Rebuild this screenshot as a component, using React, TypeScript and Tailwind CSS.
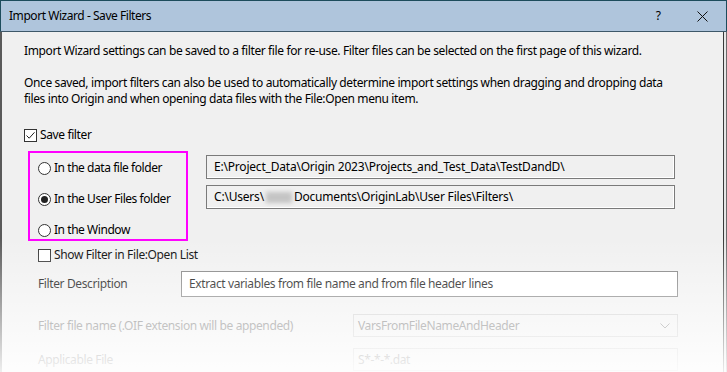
import React from "react";

function Check({ checked }: { checked?: boolean }) {
  return (
    <span className="inline-flex w-[13px] h-[13px] border border-[#333] bg-white items-center justify-center shrink-0">
      {checked && (
        <svg width="11" height="11" viewBox="0 0 11 11">
          <path d="M1.5 5.5 L4.2 8.2 L9.5 2.3" fill="none" stroke="#222" strokeWidth="1" />
        </svg>
      )}
    </span>
  );
}

function Radio({ checked }: { checked?: boolean }) {
  return (
    <span className="inline-flex w-[13px] h-[13px] rounded-full border border-[#333] bg-white items-center justify-center shrink-0">
      {checked && <span className="w-[7px] h-[7px] rounded-full bg-[#222]" />}
    </span>
  );
}

function Chevron() {
  return (
    <svg width="10" height="6" viewBox="0 0 10 6" className="ml-auto mr-[7px]">
      <path d="M0.5 0.5 L5 5 L9.5 0.5" fill="none" stroke="#888" strokeWidth="1" />
    </svg>
  );
}

export default function App() {
  return (
    <div className="relative w-[727px] h-[372px] overflow-hidden bg-white font-[family-name:Noto_Sans,sans-serif] text-[12px] text-black">
      <div className="flex flex-col w-[727px] h-full">
        {/* title bar */}
        <div className="h-[31px] shrink-0 bg-[#afc5dc] border-t border-l border-r border-[#1d4c5c] flex items-center pl-[8px]">
          <span className="leading-[16px] tracking-[-0.45px]">Import Wizard - Save Filters</span>
          <span className="ml-auto leading-[16px] mr-[36px]">?</span>
          <svg width="11" height="11" viewBox="0 0 11 11" className="mr-[18px]">
            <path d="M0.5 0.5 L10.5 10.5 M10.5 0.5 L0.5 10.5" stroke="#111" strokeWidth="1" />
          </svg>
        </div>
        {/* body */}
        <div className="flex flex-1 border-t border-[#3e5869]">
          <div className="w-[2px] bg-[#5a5a5a]" />
          <div className="flex-1 bg-[#f0f0f0] pl-[22px] pt-[11px] leading-[16px] tracking-[-0.38px]">
            <p>
              Import Wizard settings can be saved to a filter file for re-use. Filter files can be selected on the first page of this wizard.
            </p>
            <p className="mt-[16px]">
              Once saved, import filters can also be used to automatically determine import settings when dragging and dropping data
              <br />
              files into Origin and when opening data files with the File:Open menu item.
            </p>
            <div className="mt-[20px] flex items-center gap-[3px] h-[16px]">
              <Check checked />
              <span>Save filter</span>
            </div>
            <div className="flex items-start mt-[8px]">
              <div className="ml-[4px] w-[160px] h-[90px] shrink-0 border-2 border-[#ff00ff] pl-[8px] pt-[7px] flex flex-col gap-[15px] text-[12px] tracking-[-0.45px] whitespace-nowrap">
                <div className="flex items-center gap-[3px] h-[16px]">
                  <Radio />
                  <span>In the data file folder</span>
                </div>
                <div className="flex items-center gap-[3px] h-[16px]">
                  <Radio checked />
                  <span>In the User Files folder</span>
                </div>
                <div className="flex items-center gap-[3px] h-[16px]">
                  <Radio />
                  <span>In the Window</span>
                </div>
              </div>
              <div className="ml-[18px] mt-[4px] flex flex-col gap-[6px] tracking-[-0.2px] whitespace-nowrap">
                <div className="w-[469px] h-[24px] border border-[#7a7a7a] shadow-[inset_-1px_-1px_0_#ffffff] bg-[#f0f0f0] flex items-center pl-[7px]">
                  E:\Project_Data\Origin 2023\Projects_and_Test_Data\TestDandD\
                </div>
                <div className="w-[469px] h-[24px] border border-[#7a7a7a] shadow-[inset_-1px_-1px_0_#ffffff] bg-[#f0f0f0] flex items-center pl-[7px]">
                  <span>C:\Users\</span>
                  <span className="inline-block w-[26px] h-[11px] bg-[#c4c4c4] blur-[2px] mx-[2px]" />
                  <span>Documents\OriginLab\User Files\Filters\</span>
                </div>
              </div>
            </div>
            <div className="mt-[6px] ml-[14px] flex items-center gap-[3px] h-[16px]">
              <Check />
              <span>Show Filter in File:Open List</span>
            </div>
            <div className="mt-[8px] ml-[14px] flex items-center">
              <span className="w-[143px]">Filter Description</span>
              <div className="w-[497px] h-[26px] border border-[#7a7a7a] bg-white flex items-center pl-[7px]">
                Extract variables from file name and from file header lines
              </div>
            </div>
            <div className="mt-[17px] ml-[14px] flex items-center text-[#6d6d6d]">
              <span className="w-[315px]">Filter file name (.OIF extension will be appended)</span>
              <div className="w-[325px] h-[23px] border border-[#cccccc] bg-[#f0f0f0] flex items-center pl-[4px]">
                <span>VarsFromFileNameAndHeader</span>
                <Chevron />
              </div>
            </div>
            <div className="mt-[11px] ml-[14px] flex items-center text-[#6d6d6d]">
              <span className="w-[315px]">Applicable File</span>
              <div className="w-[325px] h-[23px] border border-[#cccccc] bg-[#f0f0f0] flex items-center pl-[4px]">
                <span>S*-*-*.dat</span>
              </div>
            </div>
          </div>
          <div className="w-[1px] bg-[#3a3a3a]" />
          <div className="w-[2px] bg-[#e6e6e6]" />
          <div className="w-[1px] bg-[#6a6a6a]" />
        </div>
      </div>
      {/* bottom fade */}
      <div className="absolute left-0 right-0 top-[238px] bottom-0 bg-linear-to-b from-white/0 to-white/90 pointer-events-none" />
    </div>
  );
}
